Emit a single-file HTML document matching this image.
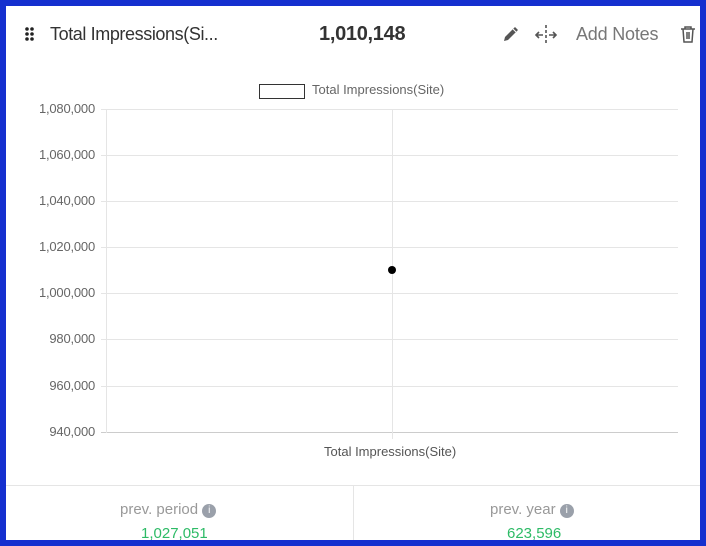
<!DOCTYPE html>
<html><head><style>
body{margin:0;width:706px;height:546px;background:#1530cf;position:relative;overflow:hidden;font-family:"Liberation Sans",sans-serif}
.card{position:absolute;left:6px;top:6px;width:694px;height:534px;background:#fff;overflow:hidden}
.t{position:absolute;white-space:nowrap}
.yl{position:absolute;right:605px;font-size:13px;color:#666;width:90px;text-align:right;letter-spacing:-0.2px}
.g{position:absolute;left:95px;width:577px;height:1px;background:#e5e5e5}
</style></head><body>
<div class="card">
<svg style="position:absolute;left:19px;top:21px" width="10" height="14"><g fill="#222"><circle cx="2" cy="2" r="1.8"/><circle cx="7" cy="2" r="1.8"/><circle cx="2" cy="7" r="1.8"/><circle cx="7" cy="7" r="1.8"/><circle cx="2" cy="12" r="1.8"/><circle cx="7" cy="12" r="1.8"/></g></svg>
<div class="t" style="left:44px;top:18px;font-size:18px;color:#333;letter-spacing:-0.4px">Total Impressions(Si...</div>
<div class="t" style="left:313px;top:17px;font-size:20px;color:#333;font-weight:bold;letter-spacing:-0.3px">1,010,148</div>
<svg style="position:absolute;left:495px;top:18px" width="20" height="20"><path d="M3 17l1-4L14 3l3 3L7 16z" fill="#555"/><path d="M12 5l3 3" stroke="#fff" stroke-width="1"/></svg>
<svg style="position:absolute;left:528px;top:18px" width="24" height="22"><g stroke="#555" stroke-width="1.6" fill="none"><path d="M12 1v20" stroke-dasharray="3 2"/><path d="M2 11h7M5 8l-3 3 3 3M15 11h7M19 8l3 3-3 3"/></g></svg>
<div class="t" style="left:570px;top:18px;font-size:18px;color:#777;letter-spacing:-0.2px">Add Notes</div>
<svg style="position:absolute;left:674px;top:19px" width="16" height="18"><g stroke="#555" stroke-width="1.5" fill="none"><path d="M1 4h14M5 4V2h6v2M3 4l1 13h8l1-13M7 7v7M9 7v7"/></g></svg>
<div style="position:absolute;left:253px;top:78px;width:44px;height:13px;border:1px solid #333"></div>
<div class="t" style="left:306px;top:76px;font-size:13px;color:#666">Total Impressions(Site)</div>
<div class="g" style="top:103px"></div><div class="g" style="top:149px"></div><div class="g" style="top:195px"></div><div class="g" style="top:241px"></div><div class="g" style="top:287px"></div><div class="g" style="top:333px"></div><div class="g" style="top:380px"></div><div class="g" style="top:426px;background:#ccc"></div>
<div style="position:absolute;left:100px;top:103px;width:1px;height:324px;background:#e5e5e5"></div>
<div style="position:absolute;left:386px;top:103px;width:1px;height:330px;background:#e5e5e5"></div>
<div class="yl" style="top:95px">1,080,000</div><div class="yl" style="top:141px">1,060,000</div><div class="yl" style="top:187px">1,040,000</div><div class="yl" style="top:233px">1,020,000</div><div class="yl" style="top:279px">1,000,000</div><div class="yl" style="top:325px">980,000</div><div class="yl" style="top:372px">960,000</div><div class="yl" style="top:418px">940,000</div>
<div style="position:absolute;left:382px;top:260px;width:8px;height:8px;border-radius:50%;background:#000"></div>
<div class="t" style="left:318px;top:438px;font-size:13px;color:#555">Total Impressions(Site)</div>
<div style="position:absolute;left:0;top:479px;width:694px;height:1px;background:#e5e5e5"></div>
<div style="position:absolute;left:347px;top:479px;width:1px;height:60px;background:#e5e5e5"></div>
<div class="t" style="left:114px;top:495px;font-size:15px;color:#999">prev. period <span style="display:inline-block;width:14px;height:14px;border-radius:50%;background:#9aa0aa;color:#fff;font-size:10px;text-align:center;line-height:14px;vertical-align:1px">i</span></div>
<div class="t" style="left:135px;top:519px;font-size:15px;color:#2dbb66">1,027,051</div>
<div class="t" style="left:484px;top:495px;font-size:15px;color:#999">prev. year <span style="display:inline-block;width:14px;height:14px;border-radius:50%;background:#9aa0aa;color:#fff;font-size:10px;text-align:center;line-height:14px;vertical-align:1px">i</span></div>
<div class="t" style="left:501px;top:519px;font-size:15px;color:#2dbb66">623,596</div>
</div>
</body></html>
